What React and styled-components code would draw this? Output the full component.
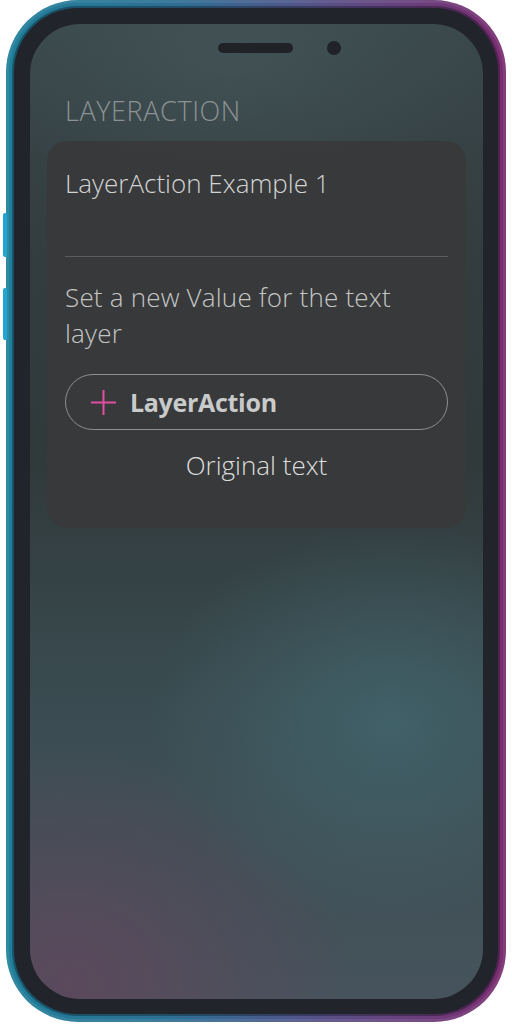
import React from "react";
import styled, { createGlobalStyle } from "styled-components";

const Global = createGlobalStyle`
  html, body { margin: 0; padding: 0; background: #ffffff; }
  body { font-family: "Open Sans", "Noto Sans", sans-serif; }
`;

const Stage = styled.div`
  width: 512px;
  height: 1024px;
  display: flex;
  justify-content: flex-start;
  padding-left: 6px;
  box-sizing: border-box;
`;

const Phone = styled.div`
  position: relative;
  width: 500px;
  height: 1022px;
`;

const SideKey = styled.span`
  position: absolute;
  left: -3px;
  top: ${(p) => p.$top}px;
  width: 4px;
  height: ${(p) => p.$h}px;
  border-radius: 2px 0 0 2px;
  background: #1fa6d2;
`;

const Frame = styled.div`
  height: 100%;
  box-sizing: border-box;
  padding: 8px;
  border-radius: 72px;
  background: linear-gradient(90deg, #1f7f99 0%, #2f6e93 35%, #5a4f86 65%, #7a2d70 100%);
  box-shadow: inset 0 0 0 3px rgba(255, 255, 255, 0.08);
`;

const Bezel = styled.div`
  height: 100%;
  box-sizing: border-box;
  padding: 16px 15px 15px 16px;
  border-radius: 64px;
  background: #22242b;
  box-shadow: 0 0 0 2px rgba(10, 12, 20, 0.35);
`;

const Screen = styled.div`
  position: relative;
  height: 100%;
  box-sizing: border-box;
  border-radius: 50px;
  overflow: hidden;
  padding: 70px 17px 0;
  display: flex;
  flex-direction: column;
  background:
    radial-gradient(ellipse 240px 200px at 360px 700px, rgba(66, 100, 108, 0.85), rgba(66, 100, 108, 0) 100%),
    radial-gradient(ellipse 280px 240px at 40px 960px, rgba(92, 72, 92, 0.95), rgba(92, 72, 92, 0) 100%),
    radial-gradient(ellipse 260px 160px at 200px 30px, rgba(70, 88, 92, 0.6), rgba(70, 88, 92, 0) 100%),
    linear-gradient(180deg, #3a484b 0%, #333c3e 25%, #313a3b 45%, #3a4c51 70%, #46535c 100%);
`;

const Speaker = styled.span`
  position: absolute;
  left: 188px;
  top: 19px;
  width: 75px;
  height: 10px;
  border-radius: 5px;
  background: #1f2227;
`;

const Camera = styled.span`
  position: absolute;
  left: 297px;
  top: 17px;
  width: 14px;
  height: 14px;
  border-radius: 50%;
  background: #1f2227;
`;

const SectionTitle = styled.h1`
  margin: 0 0 13px 18px;
  font-family: "Open Sans", "Noto Sans", sans-serif;
  font-weight: 300;
  font-size: 27px;
  line-height: 34px;
  letter-spacing: 0.6px;
  color: #8b9293;
`;

const Card = styled.section`
  box-sizing: border-box;
  border-radius: 20px;
  background: rgba(56, 57, 58, 0.96);
  padding: 26px 18px 48px;
  display: flex;
  flex-direction: column;
`;

const CardTitle = styled.h2`
  margin: 0;
  font-family: "Open Sans", "Noto Sans", sans-serif;
  font-weight: 300;
  font-size: 26px;
  line-height: 32px;
  color: #d2d4d4;
  padding-bottom: 57px;
  border-bottom: 1px solid #5b5d5f;
`;

const Description = styled.p`
  margin: 22px 0 23px;
  font-family: "Open Sans", "Noto Sans", sans-serif;
  font-weight: 300;
  font-size: 26px;
  line-height: 36px;
  letter-spacing: 0.2px;
  color: #c4c6c6;
`;

const ActionButton = styled.button`
  display: flex;
  align-items: center;
  gap: 14px;
  height: 56px;
  padding: 0 25px;
  border: 1px solid #8e9090;
  border-radius: 28px;
  background: transparent;
  font-family: "Open Sans", "Noto Sans", sans-serif;
  font-weight: 700;
  font-size: 25px;
  letter-spacing: -0.3px;
  color: #c9cacb;
  cursor: pointer;
`;

const ResultText = styled.div`
  margin-top: 20px;
  text-align: center;
  font-family: "Open Sans", "Noto Sans", sans-serif;
  font-weight: 300;
  font-size: 26px;
  line-height: 30px;
  color: #dcdedd;
`;

function PlusIcon() {
  return (
    <svg width="25" height="25" viewBox="0 0 25 25" aria-hidden="true">
      <path d="M12.5 0v25M0 12.5h25" stroke="#e14fa0" strokeWidth="2" fill="none" />
    </svg>
  );
}

export default function App() {
  return (
    <>
      <Global />
      <Stage>
        <Phone>
          <SideKey $top={213} $h={44} />
          <SideKey $top={288} $h={52} />
          <Frame>
            <Bezel>
              <Screen>
                <Speaker />
                <Camera />
                <SectionTitle>LAYERACTION</SectionTitle>
                <Card>
                  <CardTitle>LayerAction Example 1</CardTitle>
                  <Description>Set a new Value for the text layer</Description>
                  <ActionButton type="button">
                    <PlusIcon />
                    LayerAction
                  </ActionButton>
                  <ResultText>Original text</ResultText>
                </Card>
              </Screen>
            </Bezel>
          </Frame>
        </Phone>
      </Stage>
    </>
  );
}
